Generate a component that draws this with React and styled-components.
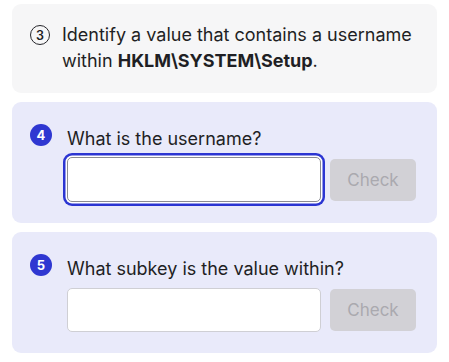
import React from "react";
import styled, { createGlobalStyle } from "styled-components";

const GlobalStyle = createGlobalStyle`
  body {
    margin: 0;
    background: #ffffff;
    font-family: Inter, "Noto Sans", sans-serif;
    color: #1b1b1f;
  }
`;

const Page = styled.div`
  display: flex;
  flex-direction: column;
  gap: 9px;
  padding: 4px 12px 10px 12px;
`;

const Card = styled.div`
  display: flex;
  align-items: flex-start;
  border-radius: 9px;
  background: ${(p) => (p.$task ? "#e9eafa" : "#f6f6f7")};
  padding: ${(p) => (p.$task ? "24px 22px 21px 18px" : "18px 22px 19px 18px")};
  gap: ${(p) => (p.$task ? "15px" : "12px")};
`;

const StepRing = styled.div`
  flex: none;
  box-sizing: border-box;
  width: 20px;
  height: 20px;
  margin-top: 3px;
  border: 1.5px solid #26262b;
  border-radius: 50%;
  display: flex;
  align-items: center;
  justify-content: center;
  font-size: 12.5px;
  font-weight: 600;
`;

const Badge = styled.div`
  flex: none;
  width: 22px;
  height: 22px;
  margin-top: -2px;
  border-radius: 50%;
  background: #2f37d1;
  color: #ffffff;
  display: flex;
  align-items: center;
  justify-content: center;
  font-size: 13px;
  font-weight: 700;
`;

const Text = styled.p`
  margin: 0;
  font-size: 18px;
  line-height: 26px;
  color: #1f1f24;
  b {
    font-weight: 700;
  }
`;

const Body = styled.div`
  flex: 1;
  display: flex;
  flex-direction: column;
  gap: 5px;
`;

const Row = styled.div`
  display: flex;
  align-items: center;
  gap: 9px;
  height: 45px;
`;

const Field = styled.input`
  flex: 1;
  min-width: 0;
  box-sizing: border-box;
  height: ${(p) => (p.$focused ? "45px" : "44px")};
  border-radius: 5px;
  border: 1px solid ${(p) => (p.$focused ? "#8b8b91" : "#cfcfd4")};
  background: #ffffff;
  outline: none;
  box-shadow: ${(p) =>
    p.$focused ? "0 0 0 1.5px #ffffff, 0 0 0 4px #2b35d2" : "none"};
  font: inherit;
`;

const CheckButton = styled.button`
  flex: none;
  width: 86px;
  height: 42px;
  border: none;
  border-radius: 5px;
  background: #d2d1d6;
  color: #aaa9af;
  font-family: Inter, "Noto Sans", sans-serif;
  font-size: 17px;
`;

function Question({ n, text, focused }) {
  return (
    <Card $task>
      <Badge>{n}</Badge>
      <Body>
        <Text>{text}</Text>
        <Row>
          <Field $focused={focused} />
          <CheckButton disabled>Check</CheckButton>
        </Row>
      </Body>
    </Card>
  );
}

export default function App() {
  return (
    <>
      <GlobalStyle />
      <Page>
        <Card>
          <StepRing>3</StepRing>
          <Text>
            Identify a value that contains a username within{" "}
            <b>HKLM\SYSTEM\Setup</b>.
          </Text>
        </Card>
        <Question n="4" text="What is the username?" focused />
        <Question n="5" text="What subkey is the value within?" />
      </Page>
    </>
  );
}
